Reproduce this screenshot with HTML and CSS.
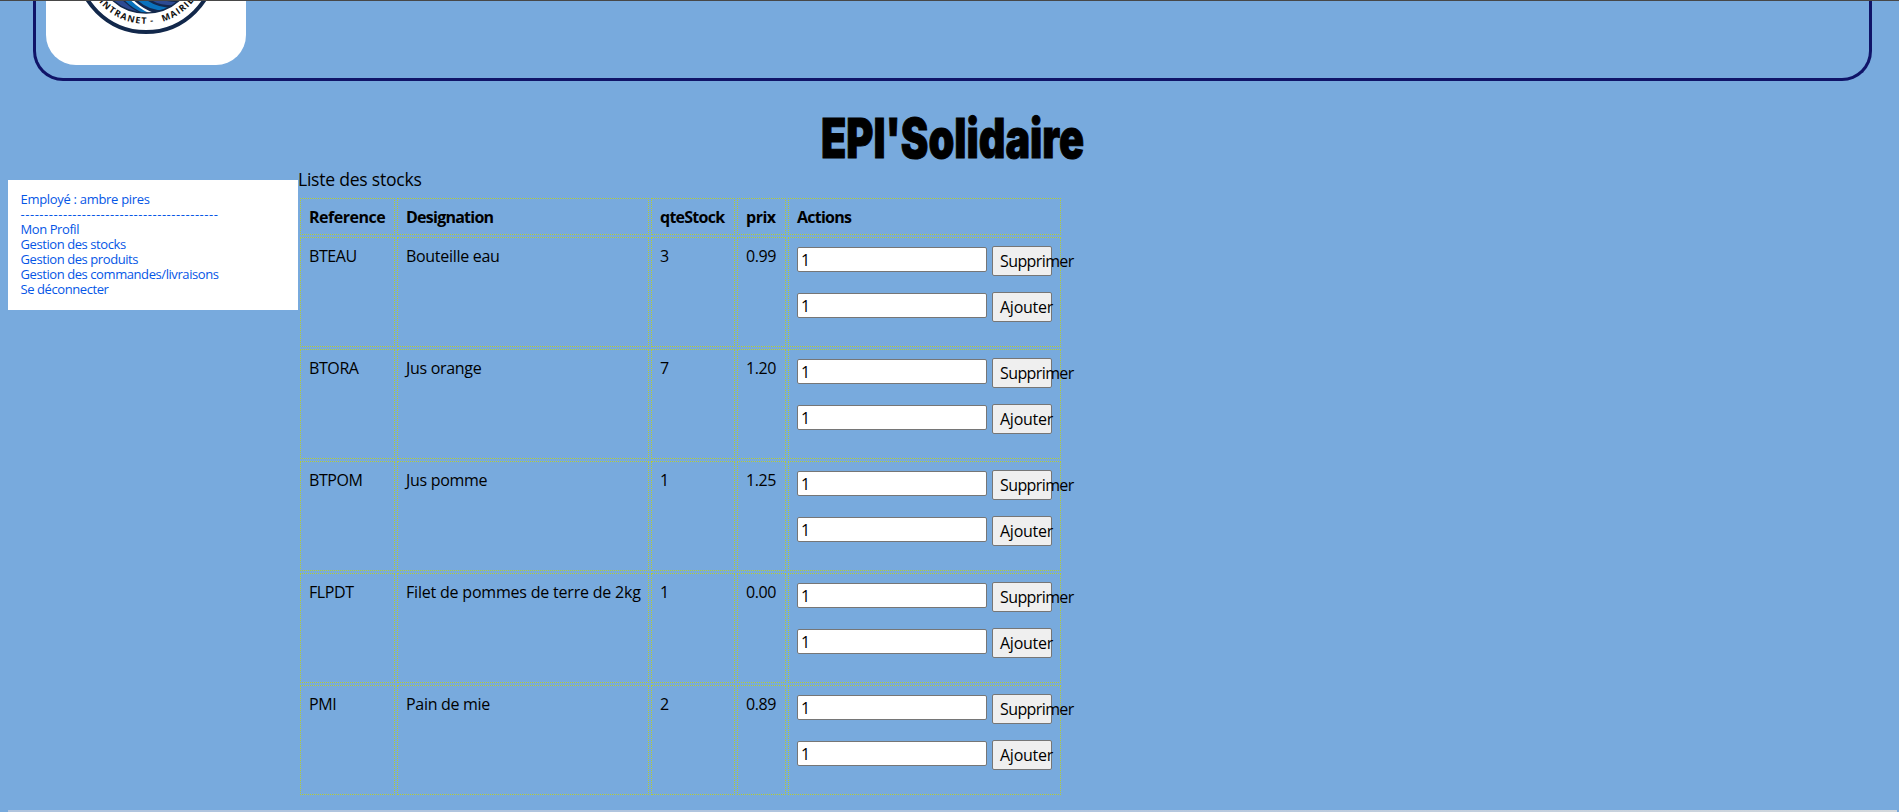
FILE: index.html
```
<!DOCTYPE html>
<html lang="fr">
<head>
<meta charset="utf-8">
<title>EPI'Solidaire</title>
<link rel="stylesheet" href="styles.css">
</head>
<body>
<header class="banner">
  <div class="logo-card">
    <svg class="logo" width="144" height="72" viewBox="74 -37 144 72">
      <defs>
        <path id="ring" d="M85 -37 A61 61 0 0 0 207 -37"/>
        <clipPath id="sea"><circle cx="146" cy="-37" r="50"/></clipPath>
      </defs>
      <circle cx="146" cy="-37" r="69" fill="#fff" stroke="#12284b" stroke-width="4"/>
      <g clip-path="url(#sea)">
        <rect x="90" y="-20" width="110" height="40" fill="#14284e"/>
        <path d="M108 -4 Q120 9 136 15 L144 15 Q128 8 117 -6Z" fill="#2c4a92"/>
        <path d="M121 -4 Q130 8 146 14 L152 14 Q138 8 127 -5Z" fill="#0a72bd"/>
        <path d="M129 -3 Q140 9 154 14" fill="none" stroke="#fff" stroke-width="2"/>
        <path d="M134 -4 Q144 10 166 11 L174 8 Q154 8 142 -4Z" fill="#0a72bd"/>
        <path d="M147 -4 Q156 7 180 5 L182 2 Q164 3 157 -4Z" fill="#2c4a92"/>
        <path d="M162 -4 Q168 1 186 -1" fill="none" stroke="#0a72bd" stroke-width="2"/>
      </g>
      <circle cx="146" cy="-37" r="50" fill="none" stroke="#12284b" stroke-width="1.5"/>
      <text class="logo-text"><textPath href="#ring" startOffset="50.8%" text-anchor="end">INTRANET</textPath></text>
      <text class="logo-text"><textPath href="#ring" startOffset="53.5%" text-anchor="middle">-</textPath></text>
      <text class="logo-text"><textPath href="#ring" startOffset="59%">MAIRIE</textPath></text>
    </svg>
  </div>
</header>
<svg class="title" width="262" height="56" role="heading"><text x="-1" y="45.5" textLength="263" lengthAdjust="spacingAndGlyphs">EPI'Solidaire</text></svg>
<main class="layout">
  <nav class="menu">
    <span>Employé : ambre pires</span>
    <span class="rule">------------------------------------------</span>
    <a class="tight">Mon Profil</a>
    <a class="tight">Gestion des stocks</a>
    <a class="tight">Gestion des produits</a>
    <a class="tight">Gestion des commandes/livraisons</a>
    <a class="tight">Se déconnecter</a>
  </nav>
  <section class="content">
    <div class="caption">Liste des stocks</div>
    <table class="stocks">
      <colgroup><col class="c-ref"><col class="c-des"><col class="c-qte"><col class="c-prix"><col class="c-act"></colgroup>
      <thead><tr><th>Reference</th><th class="tight-head">Designation</th><th class="tight-head">qteStock</th><th>prix</th><th class="tight-head">Actions</th></tr></thead>
      <tbody>
        <tr><td>BTEAU</td><td class="name">Bouteille eau</td><td>3</td><td>0.99</td><td><form><input value="1"><button type="button">Supprimer</button></form><form><input value="1"><button type="button" class="add">Ajouter</button></form></td></tr>
        <tr><td>BTORA</td><td class="name">Jus orange</td><td>7</td><td>1.20</td><td><form><input value="1"><button type="button">Supprimer</button></form><form><input value="1"><button type="button" class="add">Ajouter</button></form></td></tr>
        <tr><td>BTPOM</td><td class="name">Jus pomme</td><td>1</td><td>1.25</td><td><form><input value="1"><button type="button">Supprimer</button></form><form><input value="1"><button type="button" class="add">Ajouter</button></form></td></tr>
        <tr><td>FLPDT</td><td class="name long">Filet de pommes de terre de 2kg</td><td>1</td><td>0.00</td><td><form><input value="1"><button type="button">Supprimer</button></form><form><input value="1"><button type="button" class="add">Ajouter</button></form></td></tr>
        <tr><td>PMI</td><td class="name">Pain de mie</td><td>2</td><td>0.89</td><td><form><input value="1"><button type="button">Supprimer</button></form><form><input value="1"><button type="button" class="add">Ajouter</button></form></td></tr>
      </tbody>
    </table>
  </section>
</main>
<footer class="footer"></footer>
</body>
</html>
```
FILE: styles.css
```
* { box-sizing: border-box; }
html { background: #78aadd; }
body {
  margin: 0;
  height: 812px;
  overflow: hidden;
  border-top: 1px solid #474747;
  display: flex;
  flex-direction: column;
  font: 16px/19px "Trebuchet MS", "Open Sans", sans-serif;
  letter-spacing: -0.4px;
  color: #000;
}
.banner {
  height: 80px;
  flex: none;
  margin: 0 27px 0 33px;
  padding: 0 10px;
  border: 3px solid #101468;
  border-top: 0;
  border-radius: 0 0 30px 30px;
}
.logo-card {
  width: 200px;
  height: 64px;
  background: #fff;
  border-radius: 0 0 30px 30px;
  overflow: hidden;
  display: flex;
  justify-content: center;
}
.logo { flex: none; margin-top: -38px; height: 72px; }
.logo-text {
  font: 700 9px "Open Sans", sans-serif;
  letter-spacing: 1.2px;
  fill: #111;
}
.title { flex: none; margin: 31px 0 0 822px; overflow: visible; }
.title text {
  font: 900 54.5px Inter, sans-serif;
  letter-spacing: 0;
  stroke: #000;
  stroke-width: 1px;
}
.layout { display: flex; align-items: flex-start; height: 642px; flex: none; padding-left: 8px; }
.menu {
  width: 290px;
  height: 130px;
  margin-top: 12px;
  padding: 12px 12.5px;
  background: #fff;
  color: #0556e6;
  font-size: 13px;
  line-height: 15px;
  letter-spacing: -0.3px;
  display: flex;
  flex-direction: column;
  white-space: nowrap;
}
.menu .rule { letter-spacing: 0.53px; }
.menu .tight { letter-spacing: -0.42px; }
.caption { height: 28px; font-size: 17.6px; line-height: 22px; letter-spacing: -0.25px; }
.stocks { width: 765px; table-layout: fixed; border-spacing: 2px; }
.c-ref { width: 95px; }
.c-des { width: 252px; }
.c-qte { width: 84px; }
.c-prix { width: 49px; }
.c-act { width: 273px; }
th, td {
  padding: 8px;
  border: 1px dotted #b5cc33;
  text-align: left;
  vertical-align: top;
  white-space: nowrap;
  line-height: 20px;
}
th { height: 37px; padding-bottom: 7px; letter-spacing: -0.5px; }
th.tight-head { letter-spacing: -0.75px; }
td { height: 110px; }
td.name { letter-spacing: -0.3px; }
td.long { letter-spacing: -0.2px; }
form { display: flex; gap: 5px; align-items: flex-start; height: 46px; margin: 0; }
input, button { font: inherit; color: #000; border-radius: 2px; }
input {
  width: 190px;
  height: 25px;
  margin-top: 1px;
  padding: 1px 3px;
  border: 1px solid #767676;
  background: #fff;
}
button {
  width: 60px;
  height: 30px;
  padding: 0 7px;
  border: 1px solid #767676;
  background: #efefef;
  text-align: left;
  letter-spacing: -0.6px;
}
button.add { letter-spacing: -0.25px; }
.footer {
  flex: none;
  height: 2px;
  margin: 0 2px 0 8px;
  background: linear-gradient(90deg, #b0c4de, #b0c4de 55%, #d3d8dc);
}
```
